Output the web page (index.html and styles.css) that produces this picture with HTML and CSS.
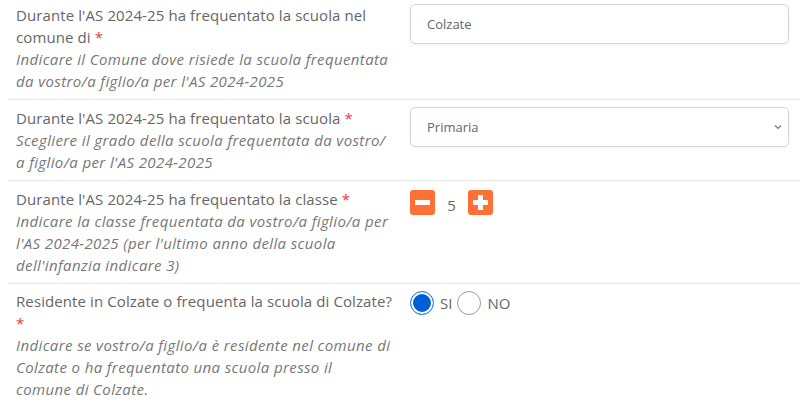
FILE: index.html
```html
<!DOCTYPE html>
<html lang="it">
<head>
<meta charset="utf-8">
<link rel="stylesheet" href="styles.css">
</head>
<body>
<div class="form">
  <div class="row">
    <div class="label">
      <div class="q">Durante l'AS 2024-25 ha frequentato la scuola nel comune di <span class="req">*</span></div>
      <div class="help">Indicare il Comune dove risiede la scuola frequentata da vostro/a figlio/a per l'AS 2024-2025</div>
    </div>
    <div class="field">
      <div class="input">Colzate</div>
    </div>
  </div>
  <div class="row">
    <div class="label">
      <div class="q">Durante l'AS 2024-25 ha frequentato la scuola <span class="req">*</span></div>
      <div class="help">Scegliere il grado della scuola frequentata da vostro/<br>a figlio/a per l'AS 2024-2025</div>
    </div>
    <div class="field">
      <div class="input select"><span>Primaria</span>
        <svg class="chev" width="8" height="6" viewBox="0 0 8 6"><path d="M1 1.5 L4 4.5 L7 1.5" fill="none" stroke="#777" stroke-width="1.2"/></svg>
      </div>
    </div>
  </div>
  <div class="row">
    <div class="label">
      <div class="q">Durante l'AS 2024-25 ha frequentato la classe <span class="req">*</span></div>
      <div class="help">Indicare la classe frequentata da vostro/a figlio/a per l'AS 2024-2025 (per l'ultimo anno della scuola dell'infanzia indicare 3)</div>
    </div>
    <div class="field">
      <div class="stepper">
        <span class="btn"><svg width="25" height="25" viewBox="0 0 25 25"><rect x="5" y="10" width="15" height="5" fill="#fff"/></svg></span>
        <span class="val">5</span>
        <span class="btn"><svg width="25" height="25" viewBox="0 0 25 25"><rect x="5" y="10" width="15" height="5" fill="#fff"/><rect x="10" y="5" width="5" height="15" fill="#fff"/></svg></span>
      </div>
    </div>
  </div>
  <div class="row last">
    <div class="label">
      <div class="q">Residente in Colzate o frequenta la scuola di Colzate?<br><span class="req">*</span></div>
      <div class="help">Indicare se vostro/a figlio/a è residente nel comune di Colzate o ha frequentato una scuola presso il<br>comune di Colzate.</div>
    </div>
    <div class="field">
      <div class="radios">
        <span class="radio checked"></span><span class="rlabel">SI</span>
        <span class="radio"></span><span class="rlabel">NO</span>
      </div>
    </div>
  </div>
</div>
</body>
</html>
```
FILE: styles.css
```css
html, body {
  margin: 0;
  padding: 0;
  background: #fff;
}
body {
  font-family: "Open Sans", "Liberation Sans", sans-serif;
  font-size: 15px;
  color: #666;
}
.form {
  margin: -3px 0 0 8px;
}
.row {
  display: grid;
  grid-template-columns: 394px 1fr;
  border-bottom: 1px solid #e6e6e6;
  padding: 7px 0 7px;
}
.row.last {
  border-bottom: none;
  padding-top: 6px;
}
.label {
  padding: 0 8px;
  line-height: 22px;
}
.q {
  color: #666;
  letter-spacing: 0.1px;
}
.help {
  font-style: italic;
  color: #777;
  letter-spacing: 0.38px;
}
.req {
  color: #e8383d;
}
.field {
  padding: 0 11px 0 8px;
}
.input {
  height: 38px;
  border: 1px solid #d3d7dc;
  border-radius: 5px;
  box-shadow: 0 1px 3px rgba(0,0,0,0.06);
  display: flex;
  align-items: center;
  padding: 0 16px;
  font-size: 13px;
  color: #666;
}
.select {
  justify-content: space-between;
  padding-right: 6px;
}
.stepper {
  display: flex;
  align-items: center;
  margin-top: 2px;
}
.btn {
  width: 25px;
  height: 25px;
  background: #ff7036;
  border-radius: 3px;
  display: block;
}
.btn svg {
  display: block;
}
.val {
  width: 33px;
  text-align: center;
  font-size: 15px;
  color: #666;
  padding-top: 5px;
}
.radios {
  display: flex;
  align-items: center;
  margin-top: 1px;
}
.radio {
  width: 22px;
  height: 22px;
  border: 1px solid #9a9a9a;
  border-radius: 50%;
  box-sizing: content-box;
}
.radio.checked {
  background: #005fd8;
  border-color: #3b84e6;
  box-shadow: inset 0 0 0 2px #fff;
}
.rlabel {
  font-size: 15px;
  color: #666;
  margin: 0 5px 0 6px;
}
```
